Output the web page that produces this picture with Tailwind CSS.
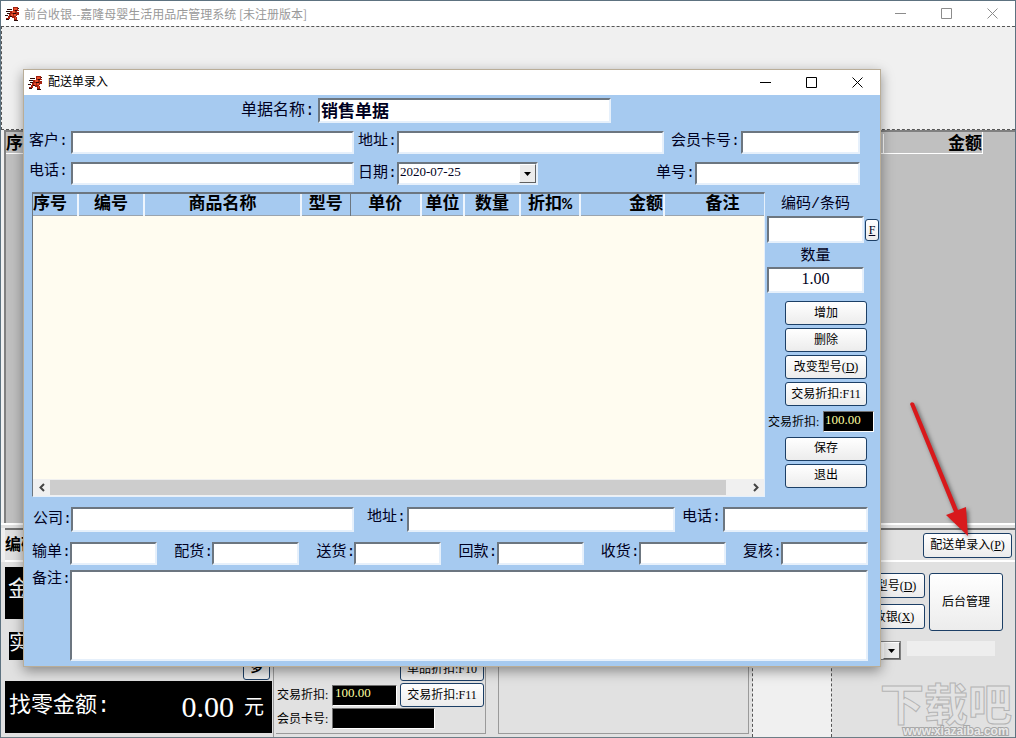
<!DOCTYPE html>
<html lang="zh-CN" class="h-full">
<head>
    <meta charset="UTF-8">
    <meta name="viewport" content="width=device-width, initial-scale=1.0">
    <title>前台收银--嘉隆母婴生活用品店管理系统</title>
    <script src="https://cdn.jsdelivr.net/npm/@tailwindcss/browser@4"></script>
</head>
<body class="h-full bg-[#f0f0f0] text-black font-['Liberation_Serif','Noto_Sans_CJK_SC',serif] text-xs overflow-hidden">
    <!-- Shared app icon -->
    <svg class="hidden">
        <symbol id="runner" viewBox="0 0 15 15">
            <path fill="#2a0806" d="M2 3h5v1H2zM1 5h4v1H1zM2 7h3v1H2zM0 9h3v1H0zM12 2h2v1h-2z"/>
            <path fill="#a3200f" d="M8 1h5v3h1v1h-2v1h2v3h-2v1h-1v1h1v3H9v-2H7v-1H5v2H3v1H1v-2h2v-2h1V8h1V5h3z"/>
            <path fill="#e8502c" d="M9 2h3v2H9zM7 5h3v2H7zM6 8h2v2H6zM9 8h2v2H9zM10 11h1v2h-1z"/>
            <path fill="#2a0806" d="M10 4h2v1h-2zM8 7h3v1H8zM5 10h2v1H5zM9 14h4v1H9zM1 13h3v1H1z"/>
        </symbol>
    </svg>

    <div class="relative min-h-full flex flex-col border-t border-x border-[#5d7280]">
        <!-- Main window title -->
        <header class="h-[25px] bg-white flex items-center pl-1 text-[#999999] font-['Noto_Sans_CJK_SC',sans-serif]">
            <svg class="size-[15px]"><use href="#runner"/></svg>
            <h1 class="ml-1 flex-1">前台收银--嘉隆母婴生活用品店管理系统 [未注册版本]</h1>
            <button aria-label="最小化" class="w-[46px] h-6 flex items-center justify-center"><svg class="size-[11px]" stroke="#8c8c8c"><path d="M0 5.5h11"/></svg></button>
            <button aria-label="最大化" class="w-[46px] h-6 flex items-center justify-center"><svg class="size-[11px]" fill="none" stroke="#8c8c8c"><path d="M.5 .5h10v10h-10z"/></svg></button>
            <button aria-label="关闭" class="w-[46px] h-6 flex items-center justify-center"><svg class="size-[11px]" stroke="#8c8c8c"><path d="M.5 .5l10 10M10.5 .5l-10 10"/></svg></button>
        </header>
        <div class="h-[104px] border-y border-l border-dashed border-[#555555]"></div>

        <!-- Main item list -->
        <section class="flex-1 ml-[3px] border-t-2 border-l-2 border-[#808080] bg-[#c0c0c0]">
            <div class="h-[22px] w-[977px] pt-[2px] flex justify-between items-center border-b border-r border-white bg-[#c0c0c0] text-[17px] leading-5 font-bold">
                <span>序号</span>
                <span class="w-[99px] h-full border-l border-white text-right">金额</span>
            </div>
        </section>
        <div class="h-[5px] bg-[#e1e1e1] border-t-2 border-white"></div>

        <div class="h-[34px] ml-1 flex items-center justify-between border-t-2 border-t-[#707070] border-b-2 border-b-white bg-[#e1e1e1] pr-[3px]">
            <span class="text-base font-bold">编码</span>
            <button class="w-[89px] h-[25px] border border-[#1c3f66] rounded-[3px] bg-linear-to-b from-white to-[#ececec] whitespace-nowrap">配送单录入(<u>P</u>)</button>
        </div>

        <!-- Bottom panels -->
        <section class="h-[176px] flex bg-[#e1e1e1] border-b border-[#6d7d86]">
            <div class="w-[273px] shrink-0 pl-1 border-r border-[#9a9a9a] flex flex-col">
                <div class="mt-[5px] h-[52px] bg-black text-white text-[22px] leading-[44px] pl-[3px]">金额</div>
                <div class="mt-[13px] ml-1 w-20 h-7 bg-black text-white text-[20px] leading-[22px]">实收</div>
                <button class="-mt-1 mr-[3px] self-end w-[27px] h-6 leading-5 shrink-0 border border-[#1c3f66] rounded-[3px] bg-[#eeeeee] font-bold">多</button>
                <div class="mt-px mr-px h-[52px] shrink-0 bg-black text-white flex items-center text-[22px]">
                    <span class="ml-1 font-['Liberation_Mono','Noto_Sans_CJK_SC',monospace]">找零金额:</span>
                    <span class="ml-auto text-[30px]">0.00</span>
                    <span class="ml-[10px] mr-2 text-[20px]">元</span>
                </div>
            </div>
            <div class="w-[210px] shrink-0 ml-[2px] mb-[3px] border-r border-b border-[#9a9a9a] flex flex-col justify-end pb-1">
                <button class="ml-auto mr-px w-[84px] h-6 border border-[#1c3f66] rounded-[3px] bg-[#eeeeee]">单品折扣:F10</button>
                <div class="mt-[2px] flex items-center">
                    <label for="trade" class="w-[56px] pl-px whitespace-nowrap">交易折扣:</label>
                    <input id="trade" value="100.00" class="w-[65px] h-[21px] pb-1 pl-[2px] border border-t-[#707070] border-l-[#707070] border-white bg-black text-[#ffffa0] text-[13px]">
                    <button class="ml-auto mr-px w-[84px] h-6 border border-[#1c3f66] rounded-[3px] bg-linear-to-b from-white to-[#ececec]">交易折扣:F11</button>
                </div>
                <div class="mt-px flex items-center">
                    <label for="member" class="w-[56px] pl-px whitespace-nowrap">会员卡号:</label>
                    <input id="member" class="w-[103px] h-[21px] border border-t-[#707070] border-l-[#707070] border-white bg-black text-[#ffffa0]">
                </div>
            </div>
            <div class="w-[251px] shrink-0 ml-3 mb-[3px] border border-[#9a9a9a]"></div>
            <div class="w-[80px] shrink-0 ml-[3px] border-x border-dashed border-[#555555] bg-[#f0f0f0]"></div>
            <div class="flex-1 pt-[11px]">
                <div class="flex justify-end gap-1 pr-3">
                    <div class="flex flex-col gap-[6px]">
                        <button class="w-[82px] h-[25px] border border-[#1c3f66] rounded-[3px] bg-linear-to-b from-white to-[#ececec] whitespace-nowrap">改变型号(<u>D</u>)</button>
                        <button class="w-[82px] h-[25px] border border-[#1c3f66] rounded-[3px] bg-linear-to-b from-white to-[#ececec] pl-5 whitespace-nowrap">收银(<u>X</u>)</button>
                    </div>
                    <button class="w-[74px] h-[58px] border border-[#1c3f66] rounded-[3px] bg-linear-to-b from-white to-[#ececec]">后台管理</button>
                </div>
                <div class="mt-[10px] flex justify-end gap-[6px] pr-5">
                    <div class="relative w-15 h-[19px]">
                        <select aria-label="打印方式" class="appearance-none w-full h-full border border-[#808080] bg-white"><option></option></select>
                        <span class="absolute right-px top-px w-[17px] h-[17px] border border-r-[#606060] border-b-[#606060] border-white bg-[#ececec] flex items-center justify-center pointer-events-none"><svg class="w-[7px] h-1"><path d="M0 0h7L3.5 4z"/></svg></span>
                    </div>
                    <div class="w-[88px] h-[15px] bg-[#eeeeee]"></div>
                </div>
            </div>
        </section>

        <!-- Site watermark -->
        <svg class="absolute right-0 bottom-0 w-[136px] h-[60px] pointer-events-none" fill="#e3e3e3" stroke="#b4b4b4">
            <text x="1" y="43" font-size="44" font-weight="bold" font-family="Noto Sans CJK SC">下载吧</text>
            <text x="24" y="57" font-size="12" font-weight="bold" font-family="Liberation Sans" fill="#e8e8e8" stroke="#a8a8a8" stroke-width="2" paint-order="stroke">www.xiazaiba.com</text>
        </svg>
    </div>

    <!-- Delivery order window -->
    <div role="dialog" aria-labelledby="dlg-title" class="absolute left-[23px] right-[135px] top-[69px] border border-[#b9ad98] bg-[#a6caf0] shadow-[0_4px_12px_rgba(0,0,0,0.4)] font-['Liberation_Mono','Noto_Sans_CJK_SC',monospace] text-[15px] leading-4 whitespace-nowrap text-[#000020]">
        <div class="h-[25px] bg-white flex items-center pl-1 text-xs text-black">
            <svg class="size-[15px]"><use href="#runner"/></svg>
            <h2 id="dlg-title" class="ml-[5px] flex-1">配送单录入</h2>
            <button aria-label="最小化" class="w-[46px] h-6 flex items-center justify-center"><svg class="size-[11px]" stroke="#000"><path d="M0 5.5h11"/></svg></button>
            <button aria-label="最大化" class="w-[46px] h-6 flex items-center justify-center"><svg class="size-[11px]" fill="none" stroke="#000"><path d="M.5 .5h10v10h-10z"/></svg></button>
            <button aria-label="关闭" class="w-[46px] h-6 flex items-center justify-center"><svg class="size-[11px]" stroke="#000"><path d="M.5 .5l10 10M10.5 .5l-10 10"/></svg></button>
        </div>

        <form class="pt-[3px] pb-[5px]">
            <div class="flex items-center pl-[217px]">
                <label for="bill" class="w-[77px] text-base">单据名称:</label>
                <input id="bill" value="销售单据" class="w-[293px] h-[25px] pl-px pb-[3px] bg-white border-2 border-t-[#6c7680] border-l-[#6c7680] border-[#e6f0fb] text-[17px] font-bold">
            </div>
            <div class="mt-2 flex items-center pl-[5px] pr-5">
                <label for="customer" class="w-[42px] pb-[2px]">客户:</label>
                <input id="customer" class="w-[283px] h-[23px] bg-white border-2 border-t-[#6c7680] border-l-[#6c7680] border-[#e6f0fb]">
                <label for="addr" class="w-[43px] pl-1 pb-[2px]">地址:</label>
                <input id="addr" class="flex-1 min-w-0 h-[23px] bg-white border-2 border-t-[#6c7680] border-l-[#6c7680] border-[#e6f0fb]">
                <label for="card" class="w-[77px] pl-[7px] pb-[2px]">会员卡号:</label>
                <input id="card" class="w-[119px] h-[23px] bg-white border-2 border-t-[#6c7680] border-l-[#6c7680] border-[#e6f0fb]">
            </div>
            <div class="mt-2 flex items-center pl-[5px] pr-5">
                <label for="phone" class="w-[42px] pb-1">电话:</label>
                <input id="phone" class="w-[283px] h-[23px] bg-white border-2 border-t-[#6c7680] border-l-[#6c7680] border-[#e6f0fb]">
                <label for="date" class="w-[43px] pl-1">日期:</label>
                <div class="relative w-[141px] h-[23px]">
                    <select id="date" class="appearance-none block w-full h-full pl-px pb-1 bg-white border-2 border-t-[#6c7680] border-l-[#6c7680] border-[#e6f0fb] text-[13px] leading-4 font-['Liberation_Serif','Noto_Sans_CJK_SC',serif]"><option>2020-07-25</option></select>
                    <span class="absolute right-[2px] top-[2px] w-[17px] h-[19px] border border-r-[#606060] border-b-[#606060] border-white bg-[#ececec] flex items-center justify-center pointer-events-none"><svg class="w-[7px] h-1"><path d="M0 0h7L3.5 4z"/></svg></span>
                </div>
                <label for="no" class="ml-auto w-[39px]">单号:</label>
                <input id="no" class="w-[165px] h-[23px] bg-white border-2 border-t-[#6c7680] border-l-[#6c7680] border-[#e6f0fb]">
            </div>

            <div class="mt-[7px] flex gap-[2px] pl-2">
                <!-- Order lines -->
                <div class="flex-1 min-w-0 h-[305px] flex flex-col bg-[#fffcf0] border border-t-2 border-t-[#6c7680] border-l-[#6c7680] border-[#e6f0fb]">
                    <table class="w-full table-fixed border-collapse bg-[#a6caf0] text-[17px] leading-[18px] font-bold text-black">
                        <thead>
                            <tr class="h-[21px] border-b border-[#9aa4ae]">
                                <th class="w-[45px] pt-[2px] border-r-2 border-[#eef5fd] text-left">序号</th>
                                <th class="w-[66px] pt-[2px] border-r-2 border-[#eef5fd]">编号</th>
                                <th class="w-[157px] pt-[2px] border-r-2 border-[#eef5fd]">商品名称</th>
                                <th class="w-[49px] pt-[2px] border-r border-[#6c7680]">型号</th>
                                <th class="w-[71px] pt-[2px] border-r-2 border-[#eef5fd]">单价</th>
                                <th class="w-[43px] pt-[2px] border-r-2 border-[#eef5fd]">单位</th>
                                <th class="w-[56px] pt-[2px] border-r-2 border-[#eef5fd]">数量</th>
                                <th class="w-[60px] pt-[2px] border-r-2 border-[#eef5fd]">折扣%</th>
                                <th class="w-[84px] pt-[2px] border-r-2 border-[#eef5fd] text-right">金额</th>
                                <th class="pt-[2px] pl-4">备注</th>
                            </tr>
                        </thead>
                    </table>
                    <div class="mt-auto h-[17px] flex items-center bg-[#f0f0f0]">
                        <button type="button" aria-label="向左" class="w-[17px] flex justify-center"><svg class="w-[6px] h-[9px]" fill="none" stroke="#444" stroke-width="2"><path d="M5 1L1.5 4.5L5 8"/></svg></button>
                        <div class="flex-1 h-[15px] mr-[21px] bg-[#cdcdcd]"></div>
                        <button type="button" aria-label="向右" class="w-[17px] flex justify-center"><svg class="w-[6px] h-[9px]" fill="none" stroke="#444" stroke-width="2"><path d="M1 1L4.5 4.5L1 8"/></svg></button>
                    </div>
                </div>

                <!-- Item entry -->
                <div class="w-[113px] pt-[5px]">
                    <label for="code" class="block w-[97px] text-center">编码/条码</label>
                    <div class="mt-[3px] flex items-center gap-px">
                        <input id="code" class="w-[97px] h-[27px] bg-white border-2 border-t-[#6c7680] border-l-[#6c7680] border-[#e6f0fb]">
                        <button type="button" class="w-[14px] h-[22px] border border-[#1c3f66] rounded-[3px] bg-linear-to-b from-white to-[#ececec] text-xs font-['Liberation_Serif','Noto_Sans_CJK_SC',serif]"><u>F</u></button>
                    </div>
                    <label for="qty" class="mt-[6px] block w-[97px] text-center">数量</label>
                    <input id="qty" value="1.00" class="mt-[2px] block w-[97px] h-[26px] pb-[3px] bg-white border-2 border-t-[#6c7680] border-l-[#6c7680] border-[#e6f0fb] text-center text-base font-['Liberation_Serif','Noto_Sans_CJK_SC',serif]">
                    <div class="mt-2 ml-[18px] w-[82px] flex flex-col gap-[3px] text-xs text-black font-['Liberation_Serif','Noto_Sans_CJK_SC',serif]">
                        <button type="button" class="h-6 border border-[#1c3f66] rounded-[3px] bg-linear-to-b from-white to-[#ececec]">增加</button>
                        <button type="button" class="h-6 border border-[#1c3f66] rounded-[3px] bg-linear-to-b from-white to-[#ececec]">删除</button>
                        <button type="button" class="h-6 border border-[#1c3f66] rounded-[3px] bg-linear-to-b from-white to-[#ececec]">改变型号(<u>D</u>)</button>
                        <button type="button" class="h-6 border border-[#1c3f66] rounded-[3px] bg-linear-to-b from-white to-[#ececec]">交易折扣:F11</button>
                    </div>
                    <div class="mt-[5px] flex items-center text-xs text-black font-['Liberation_Serif','Noto_Sans_CJK_SC',serif]">
                        <label for="discount" class="w-[56px] pl-px">交易折扣:</label>
                        <input id="discount" value="100.00" class="w-[51px] h-[21px] pb-1 pl-px border border-t-[#707070] border-l-[#707070] border-white bg-black text-[#ffffa0] text-[13px]">
                    </div>
                    <div class="mt-[5px] ml-[18px] w-[82px] flex flex-col gap-[3px] text-xs text-black">
                        <button type="button" class="h-6 border border-[#1c3f66] rounded-[3px] bg-linear-to-b from-white to-[#ececec]">保存</button>
                        <button type="button" class="h-6 border border-[#1c3f66] rounded-[3px] bg-linear-to-b from-white to-[#ececec]">退出</button>
                    </div>
                </div>
            </div>

            <!-- Company and sign-off -->
            <div class="mt-[10px] flex items-center pl-[9px] pr-3">
                <label for="company" class="w-[38px]">公司:</label>
                <input id="company" class="w-[283px] h-[25px] bg-white border-2 border-t-[#6c7680] border-l-[#6c7680] border-[#e6f0fb]">
                <label for="caddr" class="w-[53px] pl-[13px] pb-1">地址:</label>
                <input id="caddr" class="flex-1 min-w-0 h-[25px] bg-white border-2 border-t-[#6c7680] border-l-[#6c7680] border-[#e6f0fb]">
                <label for="cphone" class="w-[48px] pl-[7px] pb-1">电话:</label>
                <input id="cphone" class="w-[145px] h-[25px] bg-white border-2 border-t-[#6c7680] border-l-[#6c7680] border-[#e6f0fb]">
            </div>
            <div class="mt-[10px] flex items-center justify-between pl-2 pr-3">
                <div class="flex items-center"><label for="s1" class="w-[38px] pb-[2px]">输单:</label><input id="s1" class="w-[87px] h-[23px] bg-white border-2 border-t-[#6c7680] border-l-[#6c7680] border-[#e6f0fb]"></div>
                <div class="flex items-center"><label for="s2" class="w-[38px] pb-[2px]">配货:</label><input id="s2" class="w-[87px] h-[23px] bg-white border-2 border-t-[#6c7680] border-l-[#6c7680] border-[#e6f0fb]"></div>
                <div class="flex items-center"><label for="s3" class="w-[38px] pb-[2px]">送货:</label><input id="s3" class="w-[87px] h-[23px] bg-white border-2 border-t-[#6c7680] border-l-[#6c7680] border-[#e6f0fb]"></div>
                <div class="flex items-center"><label for="s4" class="w-[38px] pb-[2px]">回款:</label><input id="s4" class="w-[87px] h-[23px] bg-white border-2 border-t-[#6c7680] border-l-[#6c7680] border-[#e6f0fb]"></div>
                <div class="flex items-center"><label for="s5" class="w-[38px] pb-[2px]">收货:</label><input id="s5" class="w-[87px] h-[23px] bg-white border-2 border-t-[#6c7680] border-l-[#6c7680] border-[#e6f0fb]"></div>
                <div class="flex items-center"><label for="s6" class="w-[38px] pb-[2px]">复核:</label><input id="s6" class="w-[87px] h-[23px] bg-white border-2 border-t-[#6c7680] border-l-[#6c7680] border-[#e6f0fb]"></div>
            </div>
            <div class="mt-[5px] flex pl-2 pr-3">
                <label for="memo" class="w-[38px] pt-[2px]">备注:</label>
                <textarea id="memo" class="flex-1 h-[91px] resize-none bg-white border-2 border-t-[#6c7680] border-l-[#6c7680] border-[#e6f0fb]"></textarea>
            </div>
        </form>
    </div>

    <!-- Pointer to the delivery order button -->
    <svg class="absolute right-[41px] top-[398px] w-[70px] h-[142px] pointer-events-none drop-shadow-[2px_2px_2px_rgba(0,0,0,0.5)]" fill="#d8191c">
        <path d="M5 6Q6 3 9 5L53 112L61 109L63 138L41 117L49 114Z"/>
    </svg>
</body>
</html>
